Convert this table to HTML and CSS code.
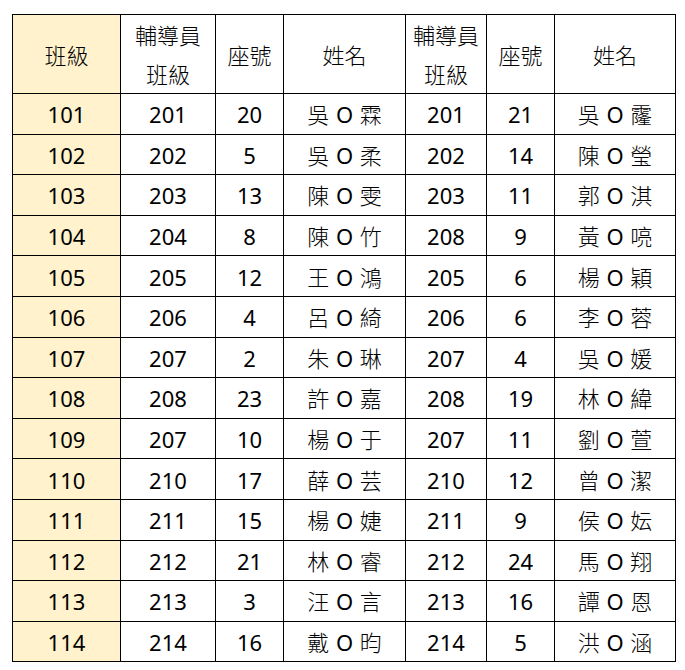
FILE: index.html
```html
<!DOCTYPE html>
<html lang="zh-Hant">
<head>
<meta charset="utf-8">
<title>班級座號表</title>
<link rel="stylesheet" href="styles.css">
</head>
<body>
<table class="roster">
  <colgroup>
    <col class="c1"><col class="c2"><col class="c3"><col class="c4"><col class="c5"><col class="c6"><col class="c7">
  </colgroup>
  <thead>
    <tr class="head">
      <th class="cls">班級</th>
      <th>輔導員<br>班級</th>
      <th>座號</th>
      <th>姓名</th>
      <th>輔導員<br>班級</th>
      <th>座號</th>
      <th>姓名</th>
    </tr>
  </thead>
  <tbody>
    <tr><td class="cls">101</td><td>201</td><td>20</td><td class="nm">吳 <span class="o">O</span> 霖</td><td>201</td><td>21</td><td class="nm">吳 <span class="o">O</span> 霳</td></tr>
    <tr><td class="cls">102</td><td>202</td><td>5</td><td class="nm">吳 <span class="o">O</span> 柔</td><td>202</td><td>14</td><td class="nm">陳 <span class="o">O</span> 瑩</td></tr>
    <tr><td class="cls">103</td><td>203</td><td>13</td><td class="nm">陳 <span class="o">O</span> 雯</td><td>203</td><td>11</td><td class="nm">郭 <span class="o">O</span> 淇</td></tr>
    <tr><td class="cls">104</td><td>204</td><td>8</td><td class="nm">陳 <span class="o">O</span> 竹</td><td>208</td><td>9</td><td class="nm">黃 <span class="o">O</span> 喨</td></tr>
    <tr><td class="cls">105</td><td>205</td><td>12</td><td class="nm">王 <span class="o">O</span> 鴻</td><td>205</td><td>6</td><td class="nm">楊 <span class="o">O</span> 穎</td></tr>
    <tr><td class="cls">106</td><td>206</td><td>4</td><td class="nm">呂 <span class="o">O</span> 綺</td><td>206</td><td>6</td><td class="nm">李 <span class="o">O</span> 蓉</td></tr>
    <tr><td class="cls">107</td><td>207</td><td>2</td><td class="nm">朱 <span class="o">O</span> 琳</td><td>207</td><td>4</td><td class="nm">吳 <span class="o">O</span> 媛</td></tr>
    <tr><td class="cls">108</td><td>208</td><td>23</td><td class="nm">許 <span class="o">O</span> 嘉</td><td>208</td><td>19</td><td class="nm">林 <span class="o">O</span> 緯</td></tr>
    <tr><td class="cls">109</td><td>207</td><td>10</td><td class="nm">楊 <span class="o">O</span> 于</td><td>207</td><td>11</td><td class="nm">劉 <span class="o">O</span> 萱</td></tr>
    <tr><td class="cls">110</td><td>210</td><td>17</td><td class="nm">薛 <span class="o">O</span> 芸</td><td>210</td><td>12</td><td class="nm">曾 <span class="o">O</span> 潔</td></tr>
    <tr><td class="cls">111</td><td>211</td><td>15</td><td class="nm">楊 <span class="o">O</span> 婕</td><td>211</td><td>9</td><td class="nm">侯 <span class="o">O</span> 妘</td></tr>
    <tr><td class="cls">112</td><td>212</td><td>21</td><td class="nm">林 <span class="o">O</span> 睿</td><td>212</td><td>24</td><td class="nm">馬 <span class="o">O</span> 翔</td></tr>
    <tr><td class="cls">113</td><td>213</td><td>3</td><td class="nm">汪 <span class="o">O</span> 言</td><td>213</td><td>16</td><td class="nm">譚 <span class="o">O</span> 恩</td></tr>
    <tr><td class="cls">114</td><td>214</td><td>16</td><td class="nm">戴 <span class="o">O</span> 昀</td><td>214</td><td>5</td><td class="nm">洪 <span class="o">O</span> 涵</td></tr>
  </tbody>
</table>
</body>
</html>
```

FILE: styles.css
```css
html, body {
  margin: 0;
  padding: 0;
  background: #ffffff;
}
body {
  padding: 14px 0 0 12px;
  font-family: "Noto Sans", "Noto Sans CJK TC", sans-serif;
  color: #000000;
}
.roster {
  border-collapse: collapse;
  table-layout: fixed;
  width: 664px;
  font-size: 22px;
}
.c1 { width: 108px; }
.c2 { width: 95px; }
.c3 { width: 68px; }
.c4 { width: 122px; }
.c5 { width: 81px; }
.c6 { width: 68px; }
.c7 { width: 121px; }
.roster th,
.roster td {
  border: 1px solid #000000;
  padding: 0;
  text-align: center;
  vertical-align: middle;
  font-weight: normal;
  white-space: nowrap;
}
.roster th {
  line-height: 39px;
  font-family: "Noto Sans CJK TC", sans-serif;
  font-weight: 300;
}
.head {
  height: 79px;
}
.roster tbody tr {
  height: 40.6px;
}
.roster td {
  line-height: 24px;
  padding-top: 1px;
}
.roster td.nm {
  font-weight: 300;
  word-spacing: 1px;
}
.roster td.nm .o {
  font-weight: 400;
}
.cls {
  background: #fff2cc;
}
```
